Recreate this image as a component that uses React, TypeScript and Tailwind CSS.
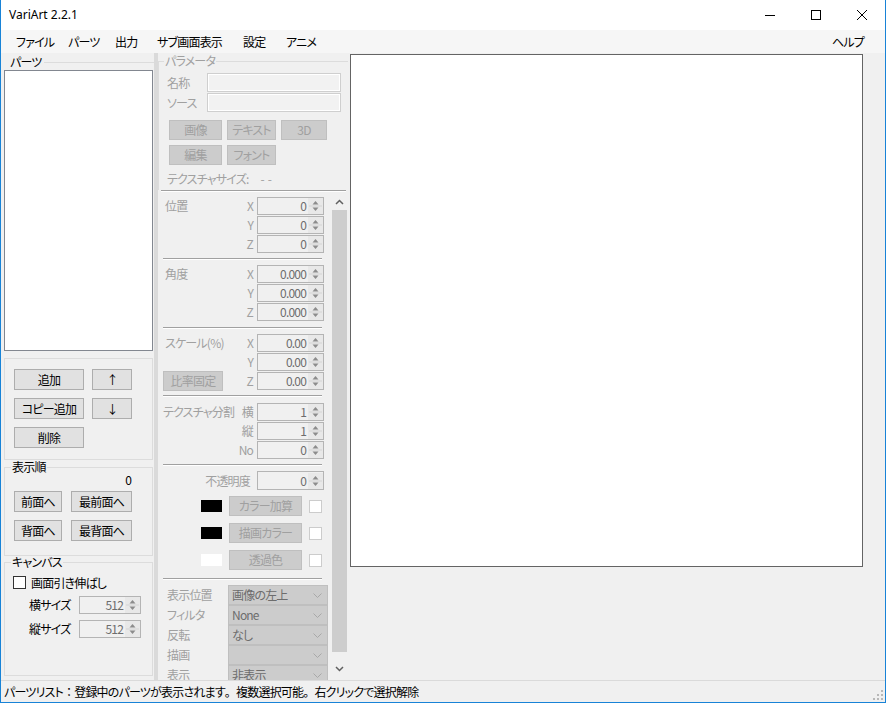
import React from "react";

const FONT = "font-['Noto_Sans_CJK_JP','Noto_Sans',sans-serif] [font-feature-settings:'palt'] tracking-[-0.8px]";
const DIS = "text-[#a0a0a0]";
const FW = "[font-feature-settings:normal]";

function Btn({ label, className = "", disabled = false }: { label: string; className?: string; disabled?: boolean }) {
  return (
    <div
      className={`flex items-center justify-center whitespace-nowrap border text-[12px] leading-[12px] ${
        disabled ? "bg-[#cccccc] border-[#bfbfbf] text-[#a0a0a0]" : "bg-[#e1e1e1] border-[#adadad] text-black"
      } ${className}`}
    >
      {label}
    </div>
  );
}

function SpinArrows() {
  return (
    <svg width="15" height="16" viewBox="0 0 15 16" className="shrink-0">
      <rect x="0" y="0" width="15" height="16" fill="#e8e8e8" />
      <path d="M7.5 3 L10.5 6.5 H4.5 Z" fill="#8c8c8c" />
      <path d="M4.5 9.5 H10.5 L7.5 13 Z" fill="#8c8c8c" />
      <line x1="1" y1="8" x2="14" y2="8" stroke="#d4d4d4" />
    </svg>
  );
}

function Num({ value, className = "w-[67px] h-[18px]" }: { value: string; className?: string }) {
  return (
    <div className={`flex items-center border border-[#b4b4b4] bg-[#f0f0f0] ${className}`}>
      <span className="flex-1 text-right pr-[2px] text-[12px] leading-[14px] text-[#6d6d6d]">{value}</span>
      <SpinArrows />
    </div>
  );
}

function Combo({ value }: { value: string }) {
  return (
    <div className="flex items-center w-[100px] h-[20px] bg-[#cccccc] border border-[#bfbfbf]">
      <span className="flex-1 pl-[3px] whitespace-nowrap text-[12px] leading-[14px] text-[#6d6d6d]">{value}</span>
      <svg width="9" height="5" className="mr-[5px]">
        <path d="M0.5 0.5 L4.5 4.5 L8.5 0.5" fill="none" stroke="#a8a8a8" />
      </svg>
    </div>
  );
}

function Sep({ className = "ml-[5px] w-[159px]" }: { className?: string }) {
  return <div className={`h-[2px] border-t border-[#a0a0a0] border-b border-b-white ${className}`} />;
}

function XyzRow({ label, axis, value, left }: { label?: string; axis: string; value: string; left?: React.ReactNode }) {
  return (
    <div className="flex items-center h-[18px]">
      <div className="w-[78px] pl-[7px] flex items-center whitespace-nowrap">
        {left ?? <span className={`text-[12px] leading-[14px] ${DIS}`}>{label}</span>}
      </div>
      <span className={`w-[17px] text-right text-[12px] leading-[14px] ${DIS}`}>{axis}</span>
      <div className="w-[4px]" />
      <Num value={value} />
    </div>
  );
}

function ColorRow({ swatch, label }: { swatch: string; label: string }) {
  return (
    <div className="flex items-center h-[20px]">
      <div className={`ml-[43px] w-[21px] h-[12px] ${swatch}`} />
      <Btn label={label} disabled className="ml-[7px] w-[73px] h-[20px]" />
      <div className="ml-[7px] w-[13px] h-[13px] bg-white border border-[#cccccc]" />
    </div>
  );
}

function ComboRow({ label, value }: { label: string; value: string }) {
  return (
    <div className="flex items-center h-[20px]">
      <span className={`w-[70px] pl-[9px] whitespace-nowrap text-[12px] leading-[14px] ${DIS}`}>{label}</span>
      <Combo value={value} />
    </div>
  );
}

function LeftPanel() {
  return (
    <div className="w-[153px] flex flex-col">
      <div className="mt-[3px] h-[12px] flex items-center">
        <span className="ml-[9px] text-[12px] leading-[12px]">パーツ</span>
        <div className="flex-1 ml-[2px] border-t border-[#dcdcdc]" />
      </div>
      <div className="mt-[2px] ml-[3px] w-[149px] h-[281px] bg-white border border-[#828790]" />

      <div className="mt-[7px] ml-[3px] w-[149px] h-[102px] border border-[#dcdcdc] flex flex-col gap-[8px] pt-[10px] pl-[9px]">
        <div className="flex gap-[8px]">
          <Btn label="追加" className="w-[70px] h-[21px]" />
          <Btn label="↑" className="w-[40px] h-[21px]" />
        </div>
        <div className="flex gap-[8px]">
          <Btn label="コピー追加" className="w-[70px] h-[21px]" />
          <Btn label="↓" className="w-[40px] h-[21px]" />
        </div>
        <Btn label="削除" className="w-[70px] h-[21px]" />
      </div>

      <fieldset className="mt-[1px] ml-[3px] w-[149px] h-[95px] border border-[#dcdcdc]">
        <legend className="ml-[6px] px-[1px] text-[12px] leading-[12px]">表示順</legend>
        <div className="h-[14px] flex justify-end pr-[21px] text-[12px] leading-[12px] pt-[1px]">0</div>
        <div className="mt-[4px] ml-[9px] flex gap-[9px]">
          <Btn label="前面へ" className="w-[48px] h-[21px]" />
          <Btn label="最前面へ" className="w-[61px] h-[21px]" />
        </div>
        <div className="mt-[8px] ml-[9px] flex gap-[9px]">
          <Btn label="背面へ" className="w-[48px] h-[21px]" />
          <Btn label="最背面へ" className="w-[61px] h-[21px]" />
        </div>
      </fieldset>

      <fieldset className="ml-[3px] w-[149px] h-[120px] border border-[#dcdcdc]">
        <legend className="ml-[6px] px-[1px] text-[12px] leading-[12px]">キャンバス</legend>
        <div className="mt-[8px] ml-[8px] flex items-center h-[13px]">
          <div className="w-[13px] h-[13px] bg-white border border-[#333333]" />
          <span className="ml-[5px] text-[12px] leading-[14px]">画面引き伸ばし</span>
        </div>
        <div className="mt-[7px] flex items-center h-[18px]">
          <span className="ml-[24px] w-[50px] text-[12px] leading-[14px]">横サイズ</span>
          <Num value="512" className="w-[62px] h-[18px]" />
        </div>
        <div className="mt-[6px] flex items-center h-[18px]">
          <span className="ml-[24px] w-[50px] text-[12px] leading-[14px]">縦サイズ</span>
          <Num value="512" className="w-[62px] h-[18px]" />
        </div>
      </fieldset>
    </div>
  );
}

function Scrollbar() {
  return (
    <div className="w-[17px] flex flex-col bg-[#f0f0f0]">
      <div className="h-[17px] flex items-center justify-center">
        <svg width="9" height="6">
          <path d="M1 5 L4.5 1.5 L8 5" fill="none" stroke="#606060" strokeWidth="1.5" />
        </svg>
      </div>
      <div className="mx-[1px] h-[442px] bg-[#cdcdcd]" />
      <div className="flex-1" />
      <div className="h-[17px] flex items-center justify-center mb-[3px]">
        <svg width="9" height="6">
          <path d="M1 1 L4.5 4.5 L8 1" fill="none" stroke="#606060" strokeWidth="1.5" />
        </svg>
      </div>
    </div>
  );
}

function MiddlePanel() {
  return (
    <div className="w-[190px] flex flex-col">
      <fieldset className="mt-[2px] h-[135px] border-t border-l border-[#dcdcdc]">
        <legend className={`ml-[5px] px-[1px] text-[12px] leading-[12px] ${DIS}`}>パラメータ</legend>
        <div className="mt-[6px] flex items-center h-[19px]">
          <span className={`w-[48px] pl-[8px] text-[12px] leading-[14px] ${DIS}`}>名称</span>
          <div className="w-[134px] h-[19px] border border-[#cfcfcf] bg-[#f2f2f2] shadow-[inset_0_0_0_1px_#ffffff]" />
        </div>
        <div className="mt-[1px] flex items-center h-[19px]">
          <span className={`w-[48px] pl-[8px] text-[12px] leading-[14px] ${DIS}`}>ソース</span>
          <div className="w-[134px] h-[19px] border border-[#cfcfcf] bg-[#f2f2f2] shadow-[inset_0_0_0_1px_#ffffff]" />
        </div>
        <div className="mt-[8px] ml-[10px] flex gap-[5px]">
          <Btn label="画像" disabled className="w-[53px] h-[20px]" />
          <Btn label="テキスト" disabled className="w-[49px] h-[20px]" />
          <Btn label="3D" disabled className="w-[46px] h-[20px]" />
        </div>
        <div className="mt-[5px] ml-[10px] flex gap-[5px]">
          <Btn label="編集" disabled className="w-[53px] h-[20px]" />
          <Btn label="フォント" disabled className="w-[49px] h-[20px]" />
        </div>
        <div className={`mt-[8px] pl-[8px] flex h-[12px] whitespace-nowrap text-[12px] leading-[12px] ${DIS}`}>
          <span>テクスチャサイズ:</span>
          <span className="ml-[12px] tracking-[3px]">--</span>
        </div>
      </fieldset>
      <Sep className="ml-[3px] w-[185px]" />

      <div className="mt-[1px] flex-1 flex overflow-hidden">
        <div className="w-[173px] flex flex-col">
          <div className="pt-[4px] flex flex-col gap-[1px]">
            <XyzRow label="位置" axis="X" value="0" />
            <XyzRow axis="Y" value="0" />
            <XyzRow axis="Z" value="0" />
          </div>
          <Sep className="mt-[5px] ml-[5px] w-[159px]" />
          <div className="mt-[5px] flex flex-col gap-[1px]">
            <XyzRow label="角度" axis="X" value="0.000" />
            <XyzRow axis="Y" value="0.000" />
            <XyzRow axis="Z" value="0.000" />
          </div>
          <Sep className="mt-[6px] ml-[5px] w-[159px]" />
          <div className="mt-[5px] flex flex-col gap-[1px]">
            <XyzRow label="スケール(%)" axis="X" value="0.00" />
            <XyzRow axis="Y" value="0.00" />
            <XyzRow
              axis="Z"
              value="0.00"
              left={<Btn label="比率固定" disabled className="-ml-[2px] w-[60px] h-[20px]" />}
            />
          </div>
          <Sep className="mt-[5px] ml-[5px] w-[159px]" />
          <div className="mt-[6px] flex flex-col gap-[1px]">
            <XyzRow
              axis="横"
              value="1"
              left={<span className={`-ml-[2px] text-[12px] leading-[14px] ${DIS}`}>テクスチャ分割</span>}
            />
            <XyzRow axis="縦" value="1" />
            <XyzRow axis="No" value="0" />
          </div>
          <Sep className="mt-[5px] ml-[5px] w-[159px]" />
          <div className="mt-[5px] flex items-center h-[19px]">
            <span className={`w-[95px] pr-[3px] text-right text-[12px] leading-[14px] ${DIS}`}>不透明度</span>
            <div className="w-[4px]" />
            <Num value="0" className="w-[67px] h-[19px]" />
          </div>
          <div className="mt-[6px] flex flex-col gap-[7px]">
            <ColorRow swatch="bg-black" label="カラー加算" />
            <ColorRow swatch="bg-black" label="描画カラー" />
            <ColorRow swatch="bg-white" label="透過色" />
          </div>
          <Sep className="mt-[8px] ml-[5px] w-[159px]" />
          <div className="mt-[5px] flex flex-col">
            <ComboRow label="表示位置" value="画像の左上" />
            <ComboRow label="フィルタ" value="None" />
            <ComboRow label="反転" value="なし" />
            <ComboRow label="描画" value="" />
            <ComboRow label="表示" value="非表示" />
          </div>
        </div>
        <Scrollbar />
      </div>
    </div>
  );
}

export default function App() {
  return (
    <div className={`w-[886px] h-[703px] flex flex-col bg-[#f0f0f0] border-l border-r border-b border-[#1883d7] text-black overflow-hidden ${FONT}`}>
      {/* title bar */}
      <div className="h-[30px] bg-white flex items-center">
        <span className="ml-[8px] text-[12px] tracking-normal font-['Segoe_UI','Noto_Sans',sans-serif]">VariArt 2.2.1</span>
        <div className="ml-auto flex h-full">
          <div className="w-[46px] flex items-center justify-center">
            <div className="w-[10px] h-[1px] bg-black" />
          </div>
          <div className="w-[46px] flex items-center justify-center">
            <div className="w-[10px] h-[10px] border border-black" />
          </div>
          <div className="w-[46px] flex items-center justify-center">
            <svg width="10" height="10" viewBox="0 0 10 10">
              <path d="M0 0 L10 10 M10 0 L0 10" stroke="#000" strokeWidth="1" />
            </svg>
          </div>
        </div>
      </div>

      {/* menu bar */}
      <div className="h-[23px] bg-[#f6f6f6] flex items-center whitespace-nowrap text-[12px] leading-[14px]">
        <div className="ml-[8px] w-[52px] pl-[7px]">ファイル</div>
        <div className="w-[47px] pl-[7px]">パーツ</div>
        <div className="w-[42px] pl-[7px]">出力</div>
        <div className="w-[86px] pl-[7px]">サブ画面表示</div>
        <div className="w-[43px] pl-[7px]">設定</div>
        <div className="w-[50px] pl-[7px]">アニメ</div>
        <div className="ml-auto mr-[21px]">ヘルプ</div>
      </div>

      {/* main */}
      <div className="h-[627px] flex">
        <LeftPanel />
        <div className="w-[4px] bg-[#dadada]" />
        <MiddlePanel />
        <div className="flex-1">
          <div className="mt-[1px] ml-[2px] w-[513px] h-[513px] bg-white border border-[#646464]" />
        </div>
      </div>

      {/* status bar */}
      <div className="h-[22px] border-t border-[#dadada] flex items-center whitespace-nowrap text-[12px] leading-[14px]">
        <span className="ml-[3px]">
          パーツリスト<span className={FW}>：</span>登録中のパーツが表示されます<span className={FW}>。</span>複数選択可能
          <span className={FW}>。</span>右クリックで選択解除
        </span>
        <svg width="12" height="12" className="ml-auto mr-[1px] self-end mb-[1px]">
          <g fill="#b8b8b8">
            <rect x="9" y="1" width="2" height="2" />
            <rect x="5" y="5" width="2" height="2" />
            <rect x="9" y="5" width="2" height="2" />
            <rect x="1" y="9" width="2" height="2" />
            <rect x="5" y="9" width="2" height="2" />
            <rect x="9" y="9" width="2" height="2" />
          </g>
        </svg>
      </div>
    </div>
  );
}
